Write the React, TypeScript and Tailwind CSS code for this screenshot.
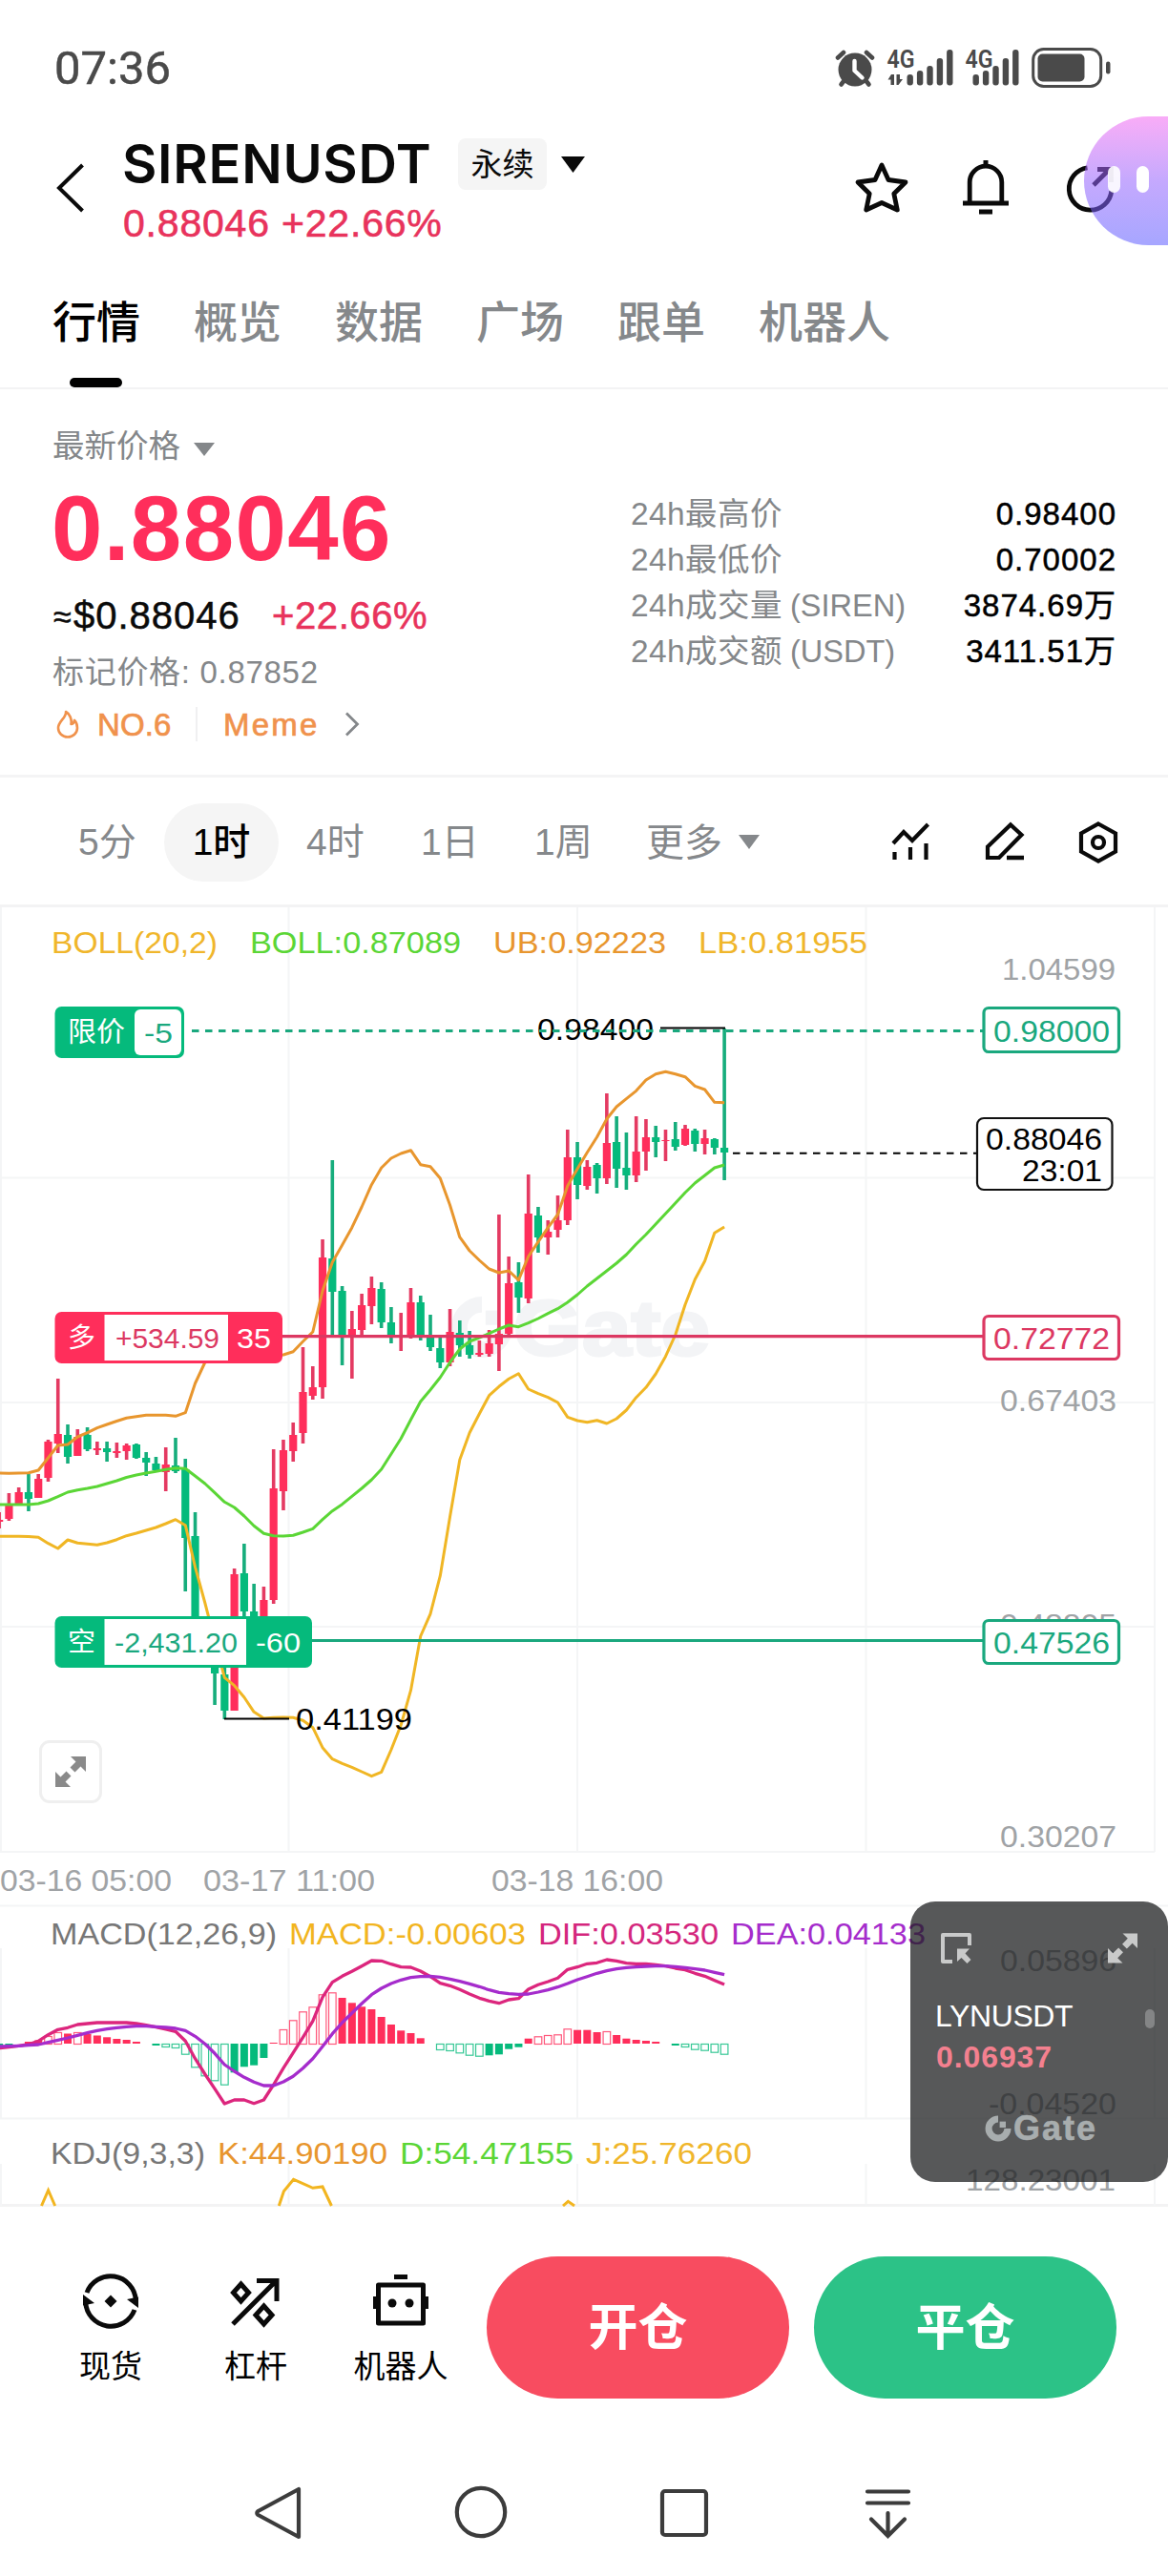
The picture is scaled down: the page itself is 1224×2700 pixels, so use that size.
import React from "react";

const RED = "#ff2e5b";
const GREEN = "#05ba7c";
const SANS = "font-['Liberation_Sans','Noto_Sans_CJK_SC',sans-serif]";

/* [high, low, bodyTop, bodyBottom, up] */
type Candle = [number, number, number, number, 0 | 1];
const FIRST = -1;
const candles: Candle[] = [
  [1585, 1602, 1593, 1595, 1], [1565, 1594, 1578, 1592, 1], [1559, 1577, 1564, 1576, 1], [1545, 1584, 1564, 1571, 0],
  [1545, 1570, 1550, 1570, 1], [1509, 1553, 1511, 1549, 1], [1445, 1523, 1503, 1513, 1], [1493, 1534, 1504, 1527, 0],
  [1498, 1526, 1506, 1526, 1], [1496, 1521, 1504, 1519, 0], [1511, 1525, 1518, 1520, 1], [1511, 1532, 1518, 1522, 0],
  [1512, 1528, 1521, 1523, 1], [1513, 1530, 1515, 1521, 1], [1513, 1529, 1514, 1528, 0], [1522, 1547, 1528, 1533, 0],
  [1527, 1542, 1534, 1541, 0], [1517, 1563, 1535, 1543, 1], [1507, 1544, 1536, 1542, 0], [1529, 1668, 1540, 1612, 0],
  [1585, 1720, 1610, 1715, 0], [1700, 1740, 1705, 1735, 0], [1720, 1787, 1725, 1754, 0], [1748, 1802, 1755, 1793, 0],
  [1644, 1793, 1650, 1793, 1], [1618, 1710, 1649, 1689, 0], [1660, 1720, 1689, 1715, 0], [1663, 1720, 1677, 1715, 1],
  [1519, 1681, 1560, 1677, 1], [1509, 1583, 1520, 1563, 1], [1491, 1532, 1504, 1521, 1], [1412, 1513, 1459, 1502, 1],
  [1432, 1467, 1454, 1463, 1], [1299, 1466, 1318, 1454, 1], [1216, 1400, 1319, 1354, 0], [1348, 1431, 1353, 1400, 0],
  [1374, 1445, 1393, 1400, 1], [1356, 1400, 1368, 1394, 1], [1338, 1388, 1350, 1369, 1], [1344, 1392, 1351, 1386, 0],
  [1370, 1408, 1386, 1401, 0], [1376, 1416, 1399, 1401, 1], [1350, 1403, 1365, 1402, 1], [1358, 1405, 1365, 1400, 0],
  [1378, 1416, 1402, 1412, 0], [1402, 1434, 1413, 1428, 0], [1372, 1432, 1396, 1428, 1], [1384, 1422, 1397, 1410, 0],
  [1395, 1424, 1410, 1420, 0], [1405, 1422, 1418, 1420, 1], [1394, 1422, 1408, 1419, 1], [1273, 1437, 1398, 1409, 1],
  [1317, 1399, 1345, 1398, 1], [1323, 1376, 1344, 1360, 0], [1231, 1366, 1272, 1361, 1], [1265, 1313, 1274, 1297, 0],
  [1279, 1315, 1291, 1297, 1], [1253, 1297, 1279, 1289, 1], [1184, 1284, 1213, 1279, 1], [1197, 1257, 1213, 1242, 0],
  [1216, 1247, 1223, 1243, 1], [1219, 1251, 1221, 1235, 0], [1146, 1241, 1198, 1235, 1], [1170, 1245, 1197, 1225, 0],
  [1187, 1247, 1224, 1232, 0], [1170, 1239, 1207, 1232, 1], [1173, 1227, 1192, 1207, 1], [1180, 1213, 1192, 1197, 0],
  [1184, 1217, 1195, 1196, 1], [1176, 1206, 1194, 1202, 0], [1179, 1201, 1183, 1200, 1], [1183, 1207, 1185, 1199, 0],
  [1184, 1210, 1193, 1199, 1], [1193, 1210, 1194, 1203, 0], [1078, 1237, 1203, 1208, 0],
];

const upper = [
  1544, 1544.3, 1544, 1543.7, 1541, 1528, 1515, 1514, 1506, 1501.7, 1496.7, 1493, 1489.5, 1486.3, 1484.7, 1483.3, 1483.3,
  1483.3, 1484.3, 1480.7, 1450, 1428, 1424, 1422, 1421, 1421, 1421, 1421, 1421, 1420, 1416.7, 1406, 1396, 1353, 1323, 1305,
  1286.7, 1265, 1241.7, 1224, 1214, 1209, 1205.7, 1220.7, 1222.7, 1235, 1263, 1296.7, 1311, 1321, 1330, 1334, 1332, 1341.7,
  1317, 1301.7, 1286.7, 1273, 1243, 1225, 1208, 1191.7, 1172.7, 1160, 1151.7, 1143.3, 1132, 1125.7, 1123.3, 1125.7, 1128.7,
  1138.3, 1142, 1155.3, 1155.7,
];
const middle = [
  1577, 1577, 1577, 1577, 1576, 1573, 1568.7, 1564, 1561.7, 1560, 1558, 1555, 1552, 1548.5, 1546, 1544, 1542.3, 1540.3,
  1538.7, 1539.3, 1547, 1555, 1564.7, 1574.3, 1580, 1589, 1599.3, 1607.3, 1609.7, 1610, 1609.3, 1606, 1602.3, 1592.7, 1583.7,
  1576.7, 1568.3, 1560, 1551, 1540, 1524, 1507.7, 1488, 1469, 1456.7, 1443.7, 1428, 1414, 1406, 1402, 1397.7, 1393, 1389,
  1390.7, 1386.7, 1382, 1376.7, 1371.7, 1365, 1357, 1348, 1340, 1332, 1324, 1315, 1304, 1294, 1283, 1272, 1261, 1250, 1240,
  1232, 1224, 1221,
];
const lower = [
  1610.3, 1610.3, 1610.3, 1610.5, 1611.3, 1617.7, 1623, 1614, 1617.3, 1618.3, 1619.3, 1617, 1613.7, 1609.7, 1607, 1604, 1601,
  1597, 1592.7, 1598.7, 1642.3, 1680, 1720, 1758.3, 1766.7, 1779, 1794.3, 1801, 1800.3, 1800, 1800.3, 1803.3, 1810.7, 1831.7,
  1843.7, 1848.3, 1852.3, 1857, 1861.7, 1857.3, 1834, 1808, 1771.7, 1715, 1691.7, 1651.7, 1590, 1530, 1501.7, 1481.7, 1462.7,
  1453.3, 1445.3, 1439.7, 1456, 1460.7, 1464.7, 1470, 1485.3, 1489, 1490.7, 1488.7, 1492, 1487, 1478, 1464.7, 1454.3, 1440,
  1421.7, 1399, 1367.5, 1341, 1321.7, 1292.3, 1286,
];
const dif = [
  2146.7, 2145.7, 2144.3, 2142.7, 2139.3, 2132.7, 2127.3, 2125.3, 2122, 2121, 2120, 2120, 2120, 2120, 2121, 2122.7, 2124.7,
  2127, 2129.3, 2139.3, 2157.7, 2174, 2189.3, 2205, 2201, 2201, 2204.7, 2201, 2185, 2167.7, 2151.7, 2135.3, 2118.3, 2093.3,
  2077.7, 2071.3, 2066.3, 2060.7, 2055, 2055.3, 2058.7, 2061.7, 2062, 2066, 2071.7, 2078.7, 2081.3, 2085.3, 2090, 2094.3,
  2097.3, 2099.7, 2096, 2094.7, 2085, 2080.3, 2077, 2073.3, 2064.3, 2061.7, 2058.3, 2057.3, 2054, 2055.3, 2057.7, 2058.3,
  2058.3, 2059.3, 2060.7, 2063, 2064.7, 2068.3, 2071.3, 2075.7, 2080,
];
const dea = [
  2145, 2144.7, 2144.3, 2143.7, 2143, 2140.7, 2138.3, 2136, 2133.3, 2130.7, 2128.3, 2126.7, 2125.3, 2124.3, 2123.7, 2123.7,
  2124.3, 2125, 2126, 2128.3, 2134.3, 2142.3, 2152.3, 2164, 2171, 2177.3, 2182.3, 2186, 2186, 2182, 2176.3, 2167.7, 2157.7,
  2145, 2131.7, 2120, 2110, 2100, 2090.7, 2084, 2079, 2075.3, 2072.7, 2071.7, 2071.3, 2072.3, 2074.3, 2076.7, 2079.3, 2082.3,
  2085.7, 2088.3, 2089.7, 2090.3, 2090, 2088, 2085.7, 2082.7, 2079, 2075, 2071.7, 2068.3, 2065.7, 2063.7, 2062.3, 2061.7,
  2061, 2060.7, 2060.7, 2061.3, 2062.3, 2063.7, 2065, 2067.3, 2069.7,
];
/* [index, signed height, hollow] */
const macdBars: [number, number, 0 | 1][] = [
  [-1, -3, 0], [0, -3, 0], [2, 2, 0], [3, 3.5, 0], [4, 8, 1], [5, 12, 1], [6, 10.5, 0], [7, 12, 1], [8, 10, 0], [9, 8.5, 0],
  [10, 6.7, 0], [11, 5, 0], [12, 4, 0], [13, 2, 0], [15, -2, 0], [16, -3, 1], [17, -4, 1], [18, -10.7, 1], [19, -24.3, 1],
  [20, -33.3, 1], [21, -38.3, 1], [22, -42.7, 1], [23, -30.3, 0], [24, -24.3, 0], [25, -22.7, 0], [26, -15, 0], [27, 1, 0],
  [28, 15, 1], [29, 24.7, 1], [30, 33.7, 1], [31, 38.7, 1], [32, 51.7, 1], [33, 53.7, 1], [34, 48, 0], [35, 42.7, 0],
  [36, 38.7, 0], [37, 36, 0], [38, 28, 0], [39, 20, 0], [40, 13.7, 0], [41, 11, 0], [42, 5.7, 0], [44, -6, 1], [45, -7, 1],
  [46, -9.3, 1], [47, -11.7, 1], [48, -12.7, 1], [49, -12.3, 0], [50, -11.3, 0], [51, -5.7, 0], [52, -3.7, 0], [53, 5.3, 0],
  [54, 7.7, 1], [55, 9, 1], [56, 9.7, 1], [57, 15.7, 1], [58, 14.3, 0], [59, 14.3, 0], [60, 12, 0], [61, 13, 1], [62, 9, 0],
  [63, 5.3, 0], [64, 4, 0], [65, 3, 0], [66, 2, 0], [68, -2, 0], [69, -3, 1], [70, -5.7, 1], [71, -6.7, 1], [72, -8.7, 1],
  [73, -10.7, 1],
];

const xAt = (i: number) => 9.4 + i * 10.27;
const toPoints = (ys: number[]) => ys.map((y, k) => `${xAt(k + FIRST).toFixed(1)},${y}`).join(" ");

function T(props: { x: number; y: number; w: number; fill: string; size?: number; bold?: boolean; children: string }) {
  return (
    <text
      x={props.x}
      y={props.y}
      textLength={props.w}
      lengthAdjust="spacingAndGlyphs"
      fill={props.fill}
      fontSize={props.size ?? 32}
      fontWeight={props.bold ? 700 : 400}
    >
      {props.children}
    </text>
  );
}

function Line({ ys, color, w = 3 }: { ys: number[]; color: string; w?: number }) {
  return <polyline points={toPoints(ys)} fill="none" stroke={color} strokeWidth={w} strokeLinejoin="round" />;
}

function GateMark({ fill }: { fill: string }) {
  return (
    <g>
      <path d="M50 8 A42 42 0 1 0 92 50 H70 A20 20 0 1 1 50 30 Z" fill={fill} />
      <rect x="55" y="27" width="20" height="20" fill={fill} />
    </g>
  );
}

function Chart() {
  const grid = "#f4f5f6";
  const vs = [1, 302.5, 605, 907.5, 1210];
  const axis = "#a0a3a6";
  return (
    <svg width="1224" height="1362" viewBox="0 951 1224 1362" className="block">
      <g stroke={grid} strokeWidth="2">
        {vs.map((x) => (
          <path key={x} d={`M${x} 951V1941M${x} 2042V2221M${x} 2268V2312`} />
        ))}
        <path d="M0 1234.5H1210M0 1470H1210M0 1705H1210M0 1941H1210M0 1997.5H1224M0 2220.5H1224" />
      </g>
      <svg x="467" y="1353" width="76" height="76" viewBox="0 0 100 100">
        <GateMark fill="#f3f4f6" />
      </svg>
      <text x="538" y="1420" textLength="206" lengthAdjust="spacingAndGlyphs" fontSize="82" fontWeight="700" fill="#f3f4f6" stroke="#f3f4f6" strokeWidth="3">Gate</text>

      <T x={54} y={999} w={174} fill="#f0b62b">BOLL(20,2)</T>
      <T x={262} y={999} w={221} fill="#5bd636">BOLL:0.87089</T>
      <T x={517} y={999} w={181} fill="#e8962e">UB:0.92223</T>
      <T x={732} y={999} w={177} fill="#f0b62b">LB:0.81955</T>

      <T x={1050} y={1027} w={119} fill={axis}>1.04599</T>
      <T x={1048} y={1479} w={122} fill={axis}>0.67403</T>
      <T x={1048} y={1714} w={122} fill={axis}>0.48805</T>
      <T x={1048} y={1936} w={122} fill={axis}>0.30207</T>

      {candles.map(([h, l, t, b, up], k) => {
        const x = xAt(k + FIRST);
        return (
          <g key={k}>
            <rect x={x - 1.8} y={h} width="3.6" height={l - h} fill={up ? "#e43a62" : "#16ad7c"} />
            <rect x={x - 4.1} y={t} width="8.2" height={b - t} fill={up ? RED : GREEN} />
          </g>
        );
      })}
      <Line ys={upper} color="#e8962e" />
      <Line ys={middle} color="#5bd636" />
      <Line ys={lower} color="#f0b624" />

      <path d="M692 1077.5H760M235 1801.5H303" stroke="#000" strokeWidth="2.2" />
      <T x={563} y={1090} w={122} fill="#000">0.98400</T>
      <T x={310} y={1813} w={122} fill="#000">0.41199</T>
      <path d="M201 1080.5H1030" stroke="#1aa87e" strokeWidth="3.2" strokeDasharray="7.5 6.5" />
      <path d="M768 1208.7H1023" stroke="#000" strokeWidth="2" strokeDasharray="7.5 6.5" />
      <path d="M296 1400.7H1030" stroke="#dc3862" strokeWidth="3.2" />
      <path d="M327 1719.5H1030" stroke="#1aa87e" strokeWidth="3.2" />

      <g fill="#fff" strokeWidth="3.2">
        <rect x="1031" y="1056.5" width="141.500" height="46" rx="5" stroke="#1aa87e" />
        <rect x="1031" y="1379.5" width="141.500" height="45" rx="5" stroke="#dc3862" />
        <rect x="1031" y="1698.5" width="141.500" height="45" rx="5" stroke="#1aa87e" />
        <rect x="1024" y="1172" width="141.500" height="75" rx="7" stroke="#111" strokeWidth="2.2" />
      </g>
      <T x={1041} y={1092} w={122} fill="#1aa87e">0.98000</T>
      <T x={1041} y={1414} w={122} fill="#dc3862">0.72772</T>
      <T x={1041} y={1733} w={122} fill="#1aa87e">0.47526</T>
      <T x={1033} y={1205} w={122} fill="#000">0.88046</T>
      <T x={1071} y={1238} w={84} fill="#000">23:01</T>

      <rect x="57.5" y="1055" width="135.5" height="54" rx="7" fill={GREEN} />
      <rect x="141" y="1058" width="49" height="48" rx="6" fill="#fff" />
      <T x={71} y={1092} w={60} size={29} fill="#fff">限价</T>
      <T x={151} y={1093} w={30} size={29} fill="#1aa87e">-5</T>

      <rect x="57.5" y="1375" width="238.5" height="54" rx="7" fill={RED} />
      <rect x="109.5" y="1378" width="129.5" height="48" fill="#fff" />
      <T x={71} y={1412} w={29} size={28} fill="#fff">多</T>
      <T x={121} y={1412.5} w={109} size={29} fill="#dc3862">+534.59</T>
      <T x={248} y={1412.5} w={36} size={29} fill="#fff">35</T>

      <rect x="57.5" y="1694" width="269.5" height="54" rx="7" fill={GREEN} />
      <rect x="109.5" y="1697" width="148.5" height="48" fill="#fff" />
      <T x={71} y={1731} w={29} size={28} fill="#fff">空</T>
      <T x={120} y={1731.5} w={129} size={29} fill="#1aa87e">-2,431.20</T>
      <T x={268} y={1731.5} w={47} size={29} fill="#fff">-60</T>

      <T x={0} y={1982} w={180} fill={axis}>03-16 05:00</T>
      <T x={213} y={1982} w={180} fill={axis}>03-17 11:00</T>
      <T x={515} y={1982} w={180} fill={axis}>03-18 16:00</T>

      {macdBars.map(([i, h, hollow]) => {
        const color = h > 0 ? RED : GREEN;
        const y = h > 0 ? 2142 - h : 2142;
        return hollow ? (
          <rect key={i} x={xAt(i) - 3.8} y={y + 0.5} width="7.6" height={Math.abs(h)} fill="#fff" stroke={color} strokeOpacity="0.8" strokeWidth="1.2" />
        ) : (
          <rect key={i} x={xAt(i) - 4} y={y} width="8" height={Math.abs(h)} fill={color} />
        );
      })}
      <Line ys={dif} color="#dc267d" w={3.3} />
      <Line ys={dea} color="#a52ccc" w={3.3} />

      <T x={53} y={2038} w={237} fill="#777">MACD(12,26,9)</T>
      <T x={303} y={2038} w={248} fill="#f2b51f">MACD:-0.00603</T>
      <T x={564} y={2038} w={189} fill="#d4267d">DIF:0.03530</T>
      <T x={766} y={2038} w={204} fill="#a52ccc">DEA:0.04133</T>

      <g fill="none" stroke="#f2b51f" strokeWidth="3">
        <path d="M43.5 2312L50.6 2295.7L57.7 2312" />
        <path d="M292.3 2312L297.4 2296.7L307.6 2284.3L327.8 2293.3L338 2292L347.4 2312" />
        <path d="M590 2312L595.3 2307.3L602 2312" />
      </g>
      <T x={53} y={2268} w={162} fill="#777">KDJ(9,3,3)</T>
      <T x={228} y={2268} w={178} fill="#e8962e">K:44.90190</T>
      <T x={419} y={2268} w={182} fill="#5bd636">D:54.47155</T>
      <T x={614} y={2268} w={174} fill="#f0b62b">J:25.76260</T>

      <T x={1048} y={2066} w={122} fill={axis}>0.05896</T>
      <T x={1036} y={2216} w={134} fill={axis}>-0.04520</T>
      <T x={1012} y={2296} w={157} fill={axis}>128.23001</T>
    </svg>
  );
}

function ExpandArrows({ className }: { className: string }) {
  return (
    <svg viewBox="0 0 32 32" className={className} fill="currentColor">
      <path d="M16 0H32V16L26.5 10.5L20.5 16.5L15.5 11.5L21.5 5.5Z" />
      <path d="M16 32H0V16L5.5 21.5L11.5 15.5L16.5 20.5L10.5 26.5Z" />
    </svg>
  );
}

function Signal({ data }: { data?: boolean }) {
  return (
    <svg width="70" height="42" viewBox="0 0 70 42" fill="#4a4a4a" className="overflow-visible">
      <text x="-0.500" y="21" fontSize="26" fontWeight="600" textLength="29" lengthAdjust="spacingAndGlyphs" className="font-[Roboto]">4G</text>
      {data && <path d="M4 28L0.500 33.500H3.500V39H7V28ZM9.500 28V39H11.500L16 33H13V28Z" />}
      {[28, 24, 19, 11, 2].map((y, i) => (
        <rect key={y} x={(data ? 20.5 : 7.5) + i * 10.4} y={y} width="6.400" height={39.5 - y} rx="3" />
      ))}
    </svg>
  );
}

function StatusBar() {
  return (
    <div className="flex h-[116px] items-center pt-[26px] pr-[59px] pl-[57px] text-[#4a4a4a]">
      <div className="font-[Roboto] text-[49px] leading-none [-webkit-text-stroke:0.5px]">07:36</div>
      <div className="ml-auto flex items-center">
        <svg width="42" height="42" viewBox="0 0 42 42" className="mr-[13px]">
          <circle cx="21" cy="23" r="17.500" fill="#4a4a4a" />
          <path d="M3 10.500L9 5M39 10.500L33 5" stroke="#4a4a4a" strokeWidth="4.600" strokeLinecap="round" />
          <path d="M10 34L6.500 38.500M32 34L35.500 38.500" stroke="#4a4a4a" strokeWidth="4.600" strokeLinecap="round" />
          <path d="M20.500 14V24L28.500 31.500" stroke="#fff" strokeWidth="4.400" fill="none" strokeLinecap="round" strokeLinejoin="round" />
        </svg>
        <Signal data />
        <div className="ml-[12px] flex"><Signal /></div>
        <svg width="84" height="42" viewBox="0 0 84 42" className="-ml-px">
          <rect x="1.7" y="1.5" width="71" height="39" rx="11" fill="none" stroke="#4a4a4a" strokeWidth="3" />
          <rect x="6.500" y="6.500" width="49" height="29" rx="5" fill="#4a4a4a" />
          <rect x="78" y="14.500" width="4.500" height="13" rx="2.200" fill="#4a4a4a" />
        </svg>
      </div>
    </div>
  );
}

function Header() {
  return (
    <header className="relative flex h-[164px] pl-[58px]">
      <svg width="32" height="54" viewBox="0 0 32 54" className="mt-[54px]" fill="none" stroke="#0a0a0a" strokeWidth="4">
        <path d="M28.500 3L4 27L28.500 51" />
      </svg>
      <div className="ml-[38px]">
        <div className="mt-[27px] flex h-[58px] items-center">
          <h1 className="w-[352px] font-[Inter] text-[56px] leading-[58px] font-semibold tracking-[0.7px] whitespace-nowrap">SIRENUSDT</h1>
          <span className="flex h-[54px] w-[93px] items-center justify-center rounded-[8px] bg-[#f5f5f5] text-[33px] leading-none">永续</span>
          <svg width="25" height="17" viewBox="0 0 25 17" className="ml-[15px]"><path d="M0 0H25L12.500 17Z" fill="#0a0a0a" /></svg>
        </div>
        <div className="mt-[10px] ml-px text-[41px] leading-[46px] tracking-[0.8px] whitespace-nowrap text-[#e8335c] [-webkit-text-stroke:0.6px]">0.88046 +22.66%</div>
      </div>
      <svg width="60" height="60" viewBox="0 0 60 60" className="absolute top-[51px] left-[894px]" fill="none" stroke="#0a0a0a" strokeWidth="4.800" strokeLinejoin="round">
        <path d="M30 6L37 21.500L55 24L42.800 36L46.300 53L30 45.500L13.700 53L17.200 36L5 24L23 21.500Z" />
      </svg>
      <svg width="50" height="60" viewBox="0 0 50 60" className="absolute top-[51px] left-[1008px]" fill="#0a0a0a">
        <path d="M8.200 46V24A16.800 16.800 0 0 1 41.800 24V46" fill="none" stroke="#0a0a0a" strokeWidth="4.800" />
        <path d="M1 43.500H49V48.500H1ZM18 52.500H32V57.500H18ZM22.500 1H27.500V7H22.500Z" />
      </svg>
      <svg width="56" height="56" viewBox="0 0 56 56" className="absolute top-[53px] left-[1115px]" fill="none" stroke="#0a0a0a" strokeWidth="4.800">
        <path d="M24.500 6.800A22.300 22.300 0 1 0 49.800 31" />
        <path d="M31 25L48 8M35 8.500H49.500V22" />
      </svg>
      <div className="absolute top-[6px] left-[1136px] h-[135px] w-[88px] rounded-l-[68px] bg-gradient-to-b from-[#f468f1]/55 via-[#9562fd]/55 to-[#5d5dff]/55">
        <div className="absolute top-[52px] left-[25px] h-[28px] w-[13px] rounded-full bg-white/90" />
        <div className="absolute top-[52px] left-[55px] h-[28px] w-[13px] rounded-full bg-white" />
      </div>
    </header>
  );
}

function Tabs() {
  const tabs = ["行情", "概览", "数据", "广场", "跟单", "机器人"];
  return (
    <nav className="flex h-[128px] gap-[56px] border-b-2 border-[#f3f3f4] pl-[55px] text-[46px] leading-none font-medium">
      {tabs.map((t, i) => (
        <div key={t} className={`relative flex h-full items-center pb-[10px] ${i === 0 ? "text-black" : "text-[#85888b]"}`}>
          {t}
          {i === 0 && <span className="absolute bottom-0 left-[18px] h-[10px] w-[55px] rounded-full bg-black" />}
        </div>
      ))}
    </nav>
  );
}

function Summary() {
  const stats = [
    ["24h最高价", "", "0.98400"],
    ["24h最低价", "", "0.70002"],
    ["24h成交量", "(SIREN)", "3874.69万"],
    ["24h成交额", "(USDT)", "3411.51万"],
  ];
  return (
    <section className="flex h-[407px] justify-between border-b-[3px] border-[#f4f4f5] pr-[55px] pl-[55px] whitespace-nowrap">
      <div>
        <div className="mt-[40px] flex h-[40px] items-center text-[33.5px] leading-none text-[#84878a]">
          最新价格
          <svg width="22" height="14" viewBox="0 0 22 14" className="mt-[6px] ml-[14px]"><path d="M0 0H22L11 14Z" fill="#84878a" /></svg>
        </div>
        <div className="mt-[18px] -ml-px text-[96px] leading-[96px] font-bold tracking-[1.4px] text-[#ff2e5b]">0.88046</div>
        <div className="mt-[19px] flex h-[48px] items-center text-[40px] leading-none">
          <span className="flex w-[230px] tracking-[1px] [-webkit-text-stroke:0.5px]">
            <span className="mt-[4px] ml-px w-[21px] text-[34px]">≈</span>$0.88046
          </span>
          <span className="tracking-[0.6px] text-[#e8335c] [-webkit-text-stroke:0.6px]">+22.66%</span>
        </div>
        <div className="mt-[15px] flex h-[40px] items-center text-[33px] leading-none tracking-[0.7px] text-[#84878a]">标记价格: 0.87852</div>
        <div className="mt-[15px] flex h-[40px] items-center text-[33px] leading-none text-[#f0924c] [-webkit-text-stroke:0.7px]">
          <svg width="24" height="30" viewBox="0 0 24 30" className="ml-[4px]" fill="none" stroke="#f0924c" strokeWidth="2.600" strokeLinejoin="round">
            <path d="M10 2C11 8 2 12 2 19A10 9.500 0 0 0 22 19C22 16 21 13 19 11C18.500 14 17 15 15.500 15C16.500 10 14 4 10 2Z" />
          </svg>
          <span className="ml-[19px] w-[103px] tracking-[0.1px]">NO.6</span>
          <span className="h-[36px] w-[2px] bg-[#f0f0f1]" />
          <span className="ml-[27px] w-[127px] tracking-[2.2px]">Meme</span>
          <svg width="16" height="26" viewBox="0 0 16 26" fill="none" stroke="#84878a" strokeWidth="2.800"><path d="M2 1.500L13.500 13L2 24.500" /></svg>
        </div>
      </div>
      <div className="mt-[107px] w-[508px] text-[33.5px] leading-[48px]">
        {stats.map(([k, unit, v]) => (
          <div key={k} className="flex h-[48px] items-center text-[#84878a]">
            <span className="w-[167px] tracking-[0.4px]">{k}</span>
            <span className="text-[32.5px]">{unit}</span>
            <span className="-mr-px ml-auto text-[33px] tracking-[1px] text-black [-webkit-text-stroke:0.5px]">{v}</span>
          </div>
        ))}
      </div>
    </section>
  );
}

function Timeframes() {
  return (
    <div className="flex h-[136px] items-center border-b-[3px] border-[#f3f3f4] pt-[2px] text-[39px] leading-none whitespace-nowrap text-[#85888b]">
      <span className="ml-[82px] w-[90px]">5分</span>
      <span className="flex h-[82px] w-[120px] items-center justify-center rounded-full bg-[#f5f5f5] font-medium text-black">1时</span>
      <span className="ml-[29px] w-[120px]">4时</span>
      <span className="w-[119px]">1日</span>
      <span className="w-[117px]">1周</span>
      <span className="text-[40px]">更多</span>
      <svg width="22" height="15" viewBox="0 0 22 15" className="ml-[17px]"><path d="M0 0H22L11 15Z" fill="#85888b" /></svg>
      <svg width="42" height="44" viewBox="0 0 42 44" className="ml-[138px]" fill="none" stroke="#0a0a0a" strokeWidth="4.200">
        <path d="M2 23L13 11L22 20L38.500 3" />
        <path d="M3.500 32V40M20 27V40M36.500 23V40" />
      </svg>
      <svg width="44" height="44" viewBox="0 0 44 44" className="ml-[55px]" fill="none" stroke="#0a0a0a" strokeWidth="4.200">
        <path d="M4 26.500L28 3.500L39.500 14L16 38H4Z" />
        <path d="M24 38H42" strokeWidth="4.500" />
      </svg>
      <svg width="44" height="46" viewBox="0 0 44 46" className="ml-[54px]" fill="none" stroke="#0a0a0a" strokeWidth="4.200">
        <path d="M22 3.500L40 13.500V32.500L22 42.500L4 32.500V13.500Z" />
        <circle cx="22" cy="23" r="6" />
      </svg>
    </div>
  );
}

function FloatCard() {
  return (
    <div className="absolute top-[1042px] left-[954px] h-[294px] w-[270px] rounded-[26px] bg-[#1f2021]/75">
      <svg width="34" height="34" viewBox="0 0 34 34" className="absolute top-[32px] left-[31px]" fill="none" stroke="#c9caca" strokeWidth="4" strokeLinejoin="round">
        <path d="M31 14V3H3V31H13" />
        <path d="M18 17.500V31L22.500 27L28.500 33L32.500 29L26.500 22.500L31 17.500Z" fill="#c9caca" stroke="none" />
      </svg>
      <ExpandArrows className="absolute top-[33px] left-[207px] h-[32px] w-[31px] text-[#c9caca]" />
      <div className="absolute top-[102px] left-[26px] text-[32px] leading-[36px] tracking-[-0.4px] text-white">LYNUSDT</div>
      <div className="absolute top-[145px] left-[27px] text-[32px] leading-[36px] font-bold tracking-[0.9px] text-[#f4808f]">0.06937</div>
      <div className="absolute top-[113px] left-[246px] h-[20px] w-[10px] rounded-full bg-[#848586]" />
      <div className="absolute top-[220px] left-[76px] flex items-center text-[#a8adae]">
        <svg width="32" height="32" viewBox="0 0 100 100"><GateMark fill="#a8adae" /></svg>
        <span className="text-[36px] leading-[36px] font-bold tracking-[2px] [-webkit-text-stroke:0.6px]">Gate</span>
      </div>
    </div>
  );
}

function BottomBar() {
  return (
    <div className="flex h-[247px] pt-[52px] pr-[54px] pl-[65px]">
      <div className="flex w-[445px] text-[33px] leading-none text-black">
        <div className="flex w-[102px] flex-col items-center">
          <svg width="60" height="60" viewBox="0 0 60 60" className="mt-[17px]" fill="none" stroke="#0a0a0a" strokeWidth="5">
            <path d="M5 21A26.500 26.500 0 0 1 56.300 29M55 39A26.500 26.500 0 0 1 3.700 31" />
            <path d="M47 28L59 25.500V37ZM13 32L1 34.500V23Z" fill="#0a0a0a" stroke="none" />
            <path d="M30 23.500L36.500 30L30 36.500L23.500 30Z" fill="#0a0a0a" stroke="none" />
          </svg>
          <span className="mt-[22px]">现货</span>
        </div>
        <div className="ml-[50px] flex w-[102px] flex-col items-center">
          <svg width="60" height="60" viewBox="0 0 60 60" className="mt-[17px]" fill="none" stroke="#0a0a0a" strokeWidth="5">
            <path d="M6 54L50 10M31 8.500H52V30" />
            <path d="M14.500 12L22.500 21L14.500 30L6.500 21Z" />
            <path d="M38.500 35L47 44.500L38.500 54L30 44.500Z" />
          </svg>
          <span className="mt-[22px]">杠杆</span>
        </div>
        <div className="ml-[50px] flex w-[102px] flex-col items-center">
          <svg width="60" height="60" viewBox="0 0 60 60" className="mt-[17px]" fill="none" stroke="#0a0a0a" strokeWidth="5" strokeLinejoin="round">
            <path d="M6.500 13H53.500V53H6.500Z" />
            <path d="M23 4.500H37M3.500 25V38M56.500 25V38" />
            <circle cx="21" cy="32" r="4.500" fill="#0a0a0a" stroke="none" />
            <circle cx="39" cy="32" r="4.500" fill="#0a0a0a" stroke="none" />
          </svg>
          <span className="mt-[22px] whitespace-nowrap">机器人</span>
        </div>
      </div>
      <button className="h-[149px] w-[317px] rounded-full bg-[#f84c60] text-[52px] font-bold text-white">开仓</button>
      <button className="ml-[26px] h-[149px] w-[317px] rounded-full bg-[#2cc287] text-[52px] font-bold text-white">平仓</button>
    </div>
  );
}

function SystemNav() {
  return (
    <div className="flex h-[140px] items-start pt-[43px]">
      <svg width="54" height="60" viewBox="0 0 54 60" className="ml-[265px]" fill="none" stroke="#3c3c3c" strokeWidth="4.200" strokeLinejoin="round">
        <path d="M48 6V56L5.500 33Q3 31 5.500 29Z" />
      </svg>
      <svg width="60" height="60" viewBox="0 0 60 60" className="ml-[155px]" fill="none" stroke="#3c3c3c" strokeWidth="4.200"><circle cx="30" cy="30" r="25.200" /></svg>
      <svg width="60" height="60" viewBox="0 0 60 60" className="ml-[153px]" fill="none" stroke="#3c3c3c" strokeWidth="4.200"><rect x="7" y="8" width="46" height="46" rx="3" /></svg>
      <svg width="60" height="60" viewBox="0 0 60 60" className="ml-[154px]" fill="none" stroke="#3c3c3c" strokeWidth="4.200" strokeLinecap="round">
        <path d="M8 8.500H51M8 20.500H51M29.500 31V55M12 37.500L29.500 55L47 37.500" />
      </svg>
    </div>
  );
}

export default function App() {
  return (
    <div className={`flex h-[2700px] w-[1224px] flex-col overflow-hidden bg-white text-[#0a0a0a] ${SANS}`}>
      <StatusBar />
      <Header />
      <Tabs />
      <Summary />
      <Timeframes />
      <div className="relative h-[1362px] border-b-[3px] border-[#f3f3f4]">
        <Chart />
        <div className="absolute top-[873px] left-[41px] flex h-[66px] w-[66px] items-center justify-center rounded-[11px] border-[3px] border-[#efefef] bg-white">
          <ExpandArrows className="h-[32px] w-[32px] text-[#8a8a8a]" />
        </div>
        <FloatCard />
      </div>
      <BottomBar />
      <SystemNav />
    </div>
  );
}
